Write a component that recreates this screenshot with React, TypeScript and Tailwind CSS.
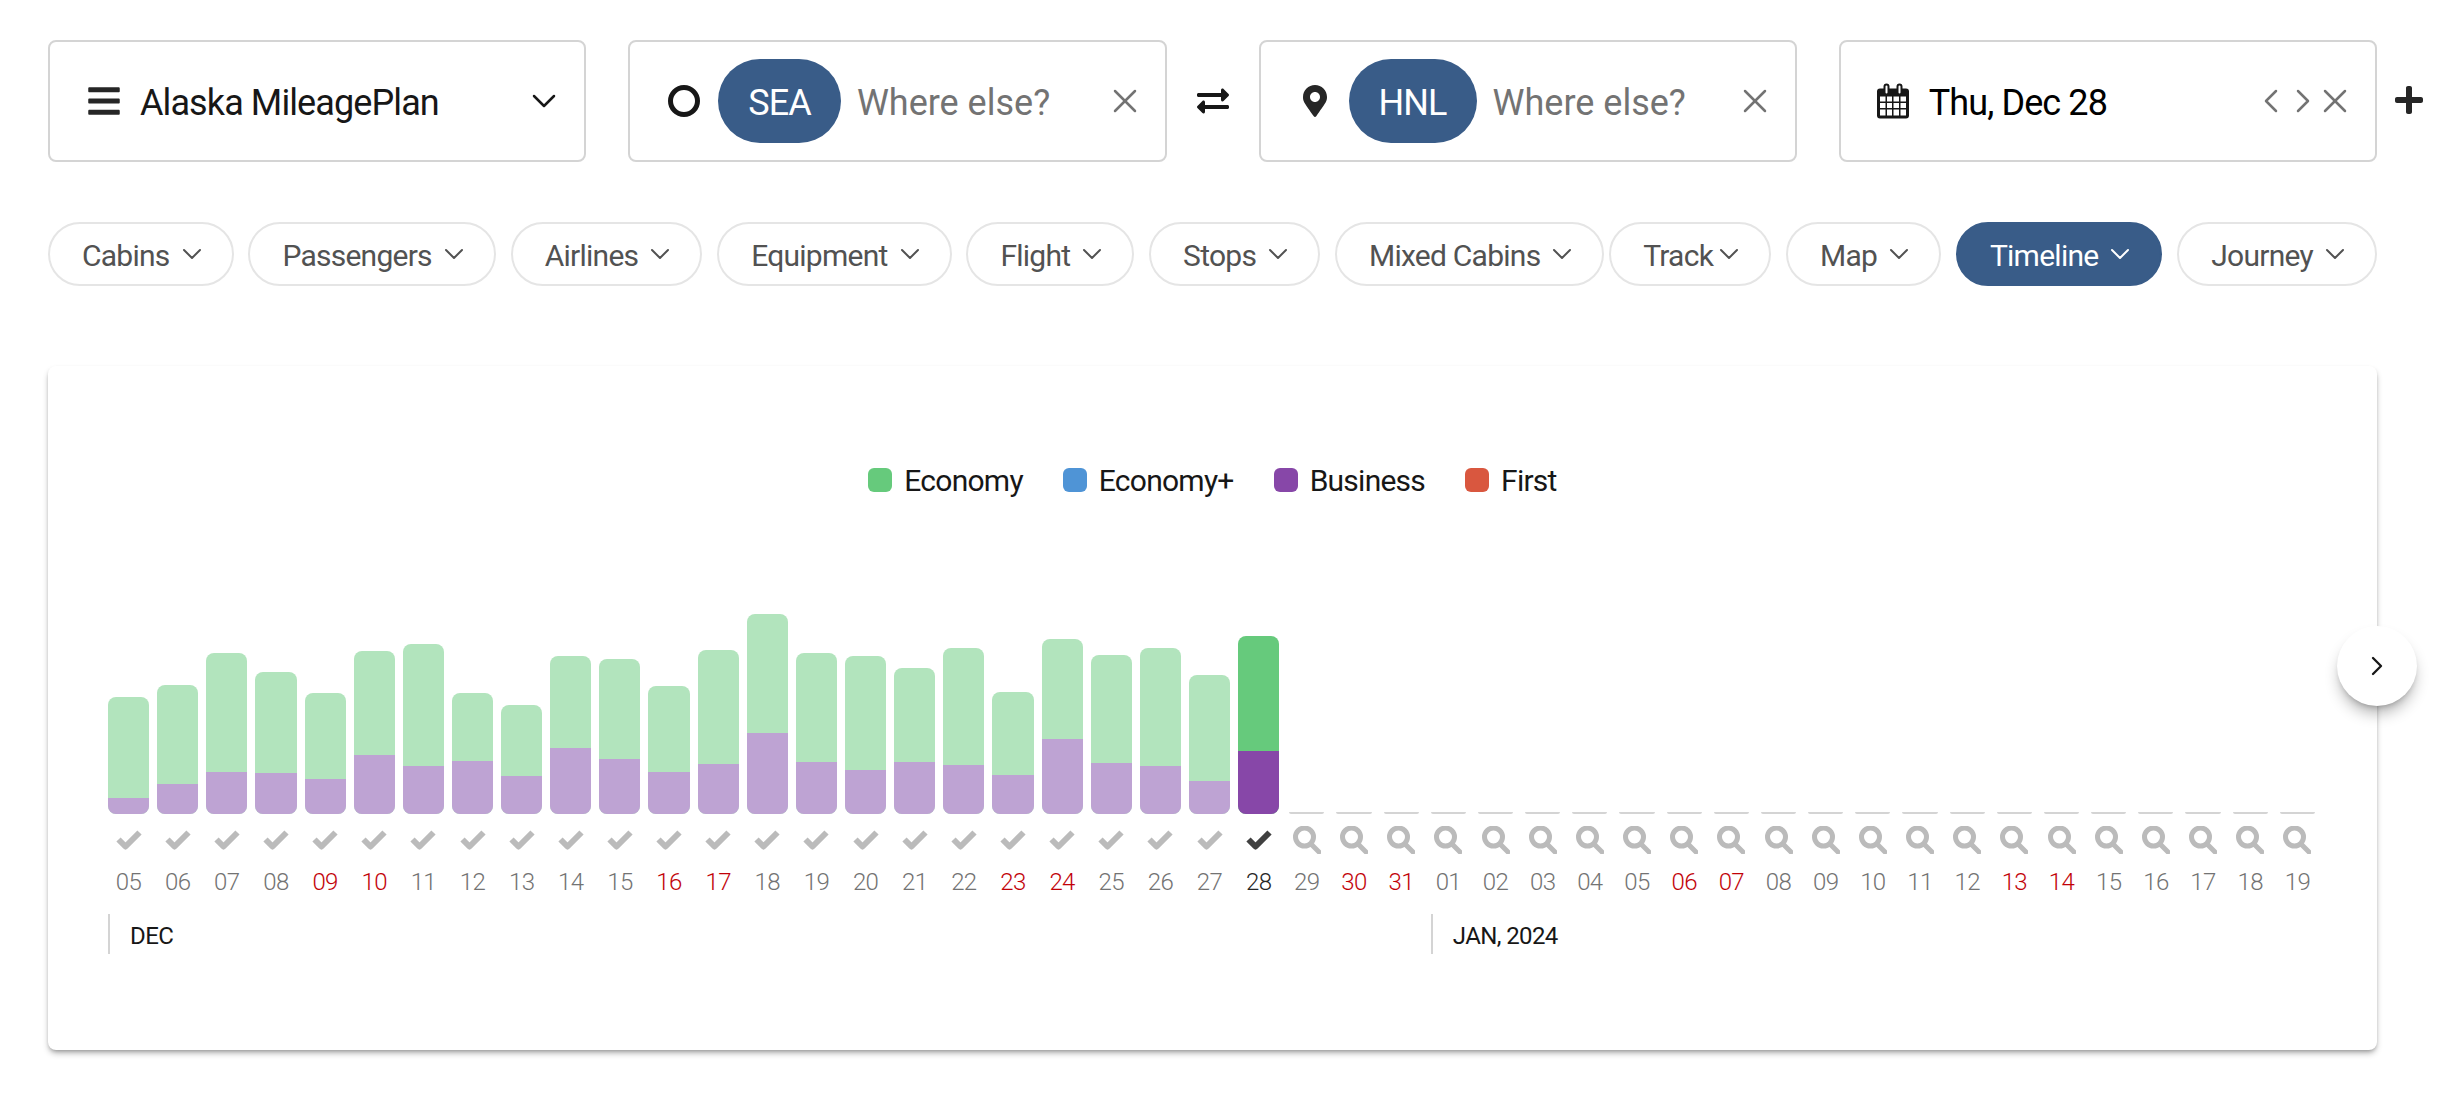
import { ChevronDown, ChevronLeft, ChevronRight, X } from "lucide-react";
import { FaBars, FaExchangeAlt, FaMapMarkerAlt, FaPlus } from "react-icons/fa";

const FONT = { fontFamily: "Roboto, sans-serif" };

const CHIPS = ["Cabins", "Passengers", "Airlines", "Equipment", "Flight", "Stops", "Mixed Cabins", "Track", "Map", "Timeline", "Journey"];

// height of the whole bar and of the purple part, in pixels
const BARS = [
  { day: "05", total: 117, business: 16 },
  { day: "06", total: 129, business: 30 },
  { day: "07", total: 161, business: 42 },
  { day: "08", total: 142, business: 41 },
  { day: "09", total: 121, business: 35, weekend: true },
  { day: "10", total: 163, business: 59, weekend: true },
  { day: "11", total: 170, business: 48 },
  { day: "12", total: 121, business: 53 },
  { day: "13", total: 109, business: 38 },
  { day: "14", total: 158, business: 66 },
  { day: "15", total: 155, business: 55 },
  { day: "16", total: 128, business: 42, weekend: true },
  { day: "17", total: 164, business: 50, weekend: true },
  { day: "18", total: 200, business: 81 },
  { day: "19", total: 161, business: 52 },
  { day: "20", total: 158, business: 44 },
  { day: "21", total: 146, business: 52 },
  { day: "22", total: 166, business: 49 },
  { day: "23", total: 122, business: 39, weekend: true },
  { day: "24", total: 175, business: 75, weekend: true },
  { day: "25", total: 159, business: 51 },
  { day: "26", total: 166, business: 48 },
  { day: "27", total: 139, business: 33 },
  { day: "28", total: 178, business: 63, current: true },
];

const EMPTY_DAYS = [
  { day: "29" },
  { day: "30", weekend: true },
  { day: "31", weekend: true },
  { day: "01" },
  { day: "02" },
  { day: "03" },
  { day: "04" },
  { day: "05" },
  { day: "06", weekend: true },
  { day: "07", weekend: true },
  { day: "08" },
  { day: "09" },
  { day: "10" },
  { day: "11" },
  { day: "12" },
  { day: "13", weekend: true },
  { day: "14", weekend: true },
  { day: "15" },
  { day: "16" },
  { day: "17" },
  { day: "18" },
  { day: "19" },
];

const LEGEND = [
  { label: "Economy", color: "bg-[#66ca7c]" },
  { label: "Economy+", color: "bg-[#4f94d6]" },
  { label: "Business", color: "bg-[#8747a8]" },
  { label: "First", color: "bg-[#d9573f]" },
];

function SearchIcon() {
  return (
    <svg viewBox="0 0 28 28" className="h-7 w-7 text-[#bbb]" fill="none" stroke="currentColor" strokeWidth="5" strokeLinecap="round">
      <circle cx="11.500" cy="11" r="9" />
      <path d="M19 19l7 7" />
    </svg>
  );
}

function CheckIcon({ dark }: { dark?: boolean }) {
  return (
    <svg viewBox="0 0 26 20" className={`h-5 w-7 ${dark ? "text-neutral-700" : "text-[#bbb]"}`} fill="none" stroke="currentColor" strokeWidth="6" strokeLinejoin="round">
      <path d="M2.500 9.500l7 7L23.500 2.500" />
    </svg>
  );
}

function CalendarIcon() {
  return (
    <svg viewBox="0 0 32 35" className="h-9 w-8 text-neutral-900">
      <path fill="currentColor" fillRule="evenodd" d="M3 5h3.5V3a3 3 0 0 1 6 0v2h7V3a3 3 0 0 1 6 0v2H29a3 3 0 0 1 3 3v24a3 3 0 0 1-3 3H3a3 3 0 0 1-3-3V8a3 3 0 0 1 3-3zM8.5 3v6a1 1 0 0 0 2 0V3a1 1 0 0 0-2 0zm13 0v6a1 1 0 0 0 2 0V3a1 1 0 0 0-2 0zM3 13v5h5.500v-5zm7 0v5h5v-5zm6.500 0v5h5.500v-5zm7 0v5H29v-5zM3 19.500v5h5.500v-5zm7 0v5h5v-5zm6.500 0v5h5.500v-5zm7 0v5H29v-5zM3 26v6h5.500v-6zm7 0v6h5v-6zm6.500 0v6h5.500v-6zm7 0v6H29v-6z" />
    </svg>
  );
}

function Airport({ icon, code }: { icon: React.ReactNode; code: string }) {
  return (
    <div className="flex h-30.5 flex-1 items-center rounded-lg border-2 border-neutral-300 bg-white pl-9 pr-5">
      <div className="flex w-9 justify-center">{icon}</div>
      <span className="ml-4 flex h-21 items-center rounded-full bg-[#395c88] px-7.5 pt-1 text-4xl tracking-tight text-white">{code}</span>
      <span className="ml-4 flex-1 pt-1 text-4xl text-neutral-500">Where else?</span>
      <X className="h-10 w-10 text-neutral-500" strokeWidth={1.5} />
    </div>
  );
}

function Chip({ label }: { label: string }) {
  const active = label === "Timeline";
  const track = label === "Track";
  return (
    <div
      className={`flex h-16 items-center rounded-full border-2 pl-8 pr-6 text-3xl tracking-tight ${
        active ? "border-[#395c88] bg-[#395c88] text-white" : "border-neutral-200 bg-white text-neutral-600"
      } ${track ? "-ml-2.5" : "gap-1.5"}`}
    >
      <span className="pt-1">{label}</span>
      <ChevronDown className="h-8 w-8" strokeWidth={1.5} />
    </div>
  );
}

export default function App() {
  return (
    <div className="min-h-screen bg-white text-neutral-900" style={FONT}>
      <div className="ml-12 w-[2329px] pt-10">
        <div className="relative flex items-center">
          <div className="flex h-30.5 flex-1 items-center rounded-lg border-2 border-neutral-300 bg-white pl-9 pr-5">
            <FaBars className="h-9 w-9 text-neutral-800" />
            <span className="ml-4.5 flex-1 pt-1 text-4xl tracking-tight">Alaska MileagePlan</span>
            <ChevronDown className="h-10 w-10" strokeWidth={1.5} />
          </div>
          <div className="w-10.5" />
          <Airport icon={<div className="h-8 w-8 rounded-full border-[5px] border-neutral-900" />} code="SEA" />
          <div className="flex w-23 justify-center">
            <FaExchangeAlt className="h-8 w-8 text-neutral-900" />
          </div>
          <Airport icon={<FaMapMarkerAlt className="h-8 w-8 text-neutral-800" />} code="HNL" />
          <div className="w-10.5" />
          <div className="flex h-30.5 flex-1 items-center rounded-lg border-2 border-neutral-300 bg-white pl-9 pr-5">
            <CalendarIcon />
            <span className="ml-5 flex-1 pt-1 text-4xl tracking-tight text-black">Thu, Dec 28</span>
            <ChevronLeft className="h-10 w-10 text-neutral-500" strokeWidth={1.5} />
            <ChevronRight className="-ml-2 h-10 w-10 text-neutral-500" strokeWidth={1.5} />
            <X className="-ml-2 h-10 w-10 text-neutral-500" strokeWidth={1.5} />
          </div>
          <FaPlus className="absolute -right-12 top-11 h-8 w-8 text-neutral-800" />
        </div>

        <div className="mt-15 flex justify-between">
          {CHIPS.map((chip) => (
            <Chip key={chip} label={chip} />
          ))}
        </div>

        <div className="relative mt-20 rounded-lg bg-white px-14 pb-24 pt-24 shadow-md shadow-black/30">
          <div className="flex h-9 items-center justify-center gap-10">
            {LEGEND.map((item) => (
              <div key={item.label} className="flex items-center gap-3 text-3xl tracking-tight">
                <div className={`h-6 w-6 rounded-md ${item.color}`} />
                <span className="pt-0.5">{item.label}</span>
              </div>
            ))}
          </div>

          <div className="mt-24 grid grid-cols-[repeat(24,25fr)_repeat(22,24fr)]">
            {BARS.map((bar) => (
              <div key={bar.day} className="flex flex-col items-stretch">
                <div className="flex h-55 flex-col justify-end px-1">
                  <div className={`flex flex-col justify-end overflow-hidden rounded-lg ${bar.current ? "bg-[#66ca7c]" : "bg-[#b2e4bd]"}`} style={{ height: bar.total }}>
                    <div className={bar.current ? "bg-[#8747a8]" : "bg-[#bea3d3]"} style={{ height: bar.business }} />
                  </div>
                </div>
                <div className="mt-3 flex h-7 items-center justify-center">
                  <CheckIcon dark={bar.current} />
                </div>
                <div className={`mt-3 text-center text-2xl font-light tracking-tight ${bar.weekend ? "text-red-700" : bar.current ? "text-neutral-800" : "text-neutral-500"}`}>
                  {bar.day}
                </div>
              </div>
            ))}
            {EMPTY_DAYS.map((item, i) => (
              <div key={i} className="flex flex-col items-stretch">
                <div className="flex h-55 flex-col justify-end px-1.5">
                  <div className="h-0.5 rounded-b bg-neutral-300" />
                </div>
                <div className="mt-3 flex h-7 items-center justify-center">
                  <SearchIcon />
                </div>
                <div className={`mt-3 text-center text-2xl font-light tracking-tight ${item.weekend ? "text-red-700" : "text-neutral-500"}`}>{item.day}</div>
              </div>
            ))}
            <div className="col-span-27 mt-4 pl-1">
              <div className="flex h-10 items-center border-l-2 border-neutral-300 pl-5 text-2xl tracking-tight">
                <span className="pt-1">DEC</span>
              </div>
            </div>
            <div className="col-span-19 mt-4 pl-1.5">
              <div className="flex h-10 items-center border-l-2 border-neutral-300 pl-5 text-2xl tracking-tight">
                <span className="pt-1">JAN, 2024</span>
              </div>
            </div>
          </div>

          <button className="absolute -right-10 top-65 flex h-20 w-20 items-center justify-center rounded-full bg-white shadow-lg shadow-black/30">
            <ChevronRight className="h-8 w-8 text-neutral-900" strokeWidth={1.75} />
          </button>
        </div>
      </div>
    </div>
  );
}
